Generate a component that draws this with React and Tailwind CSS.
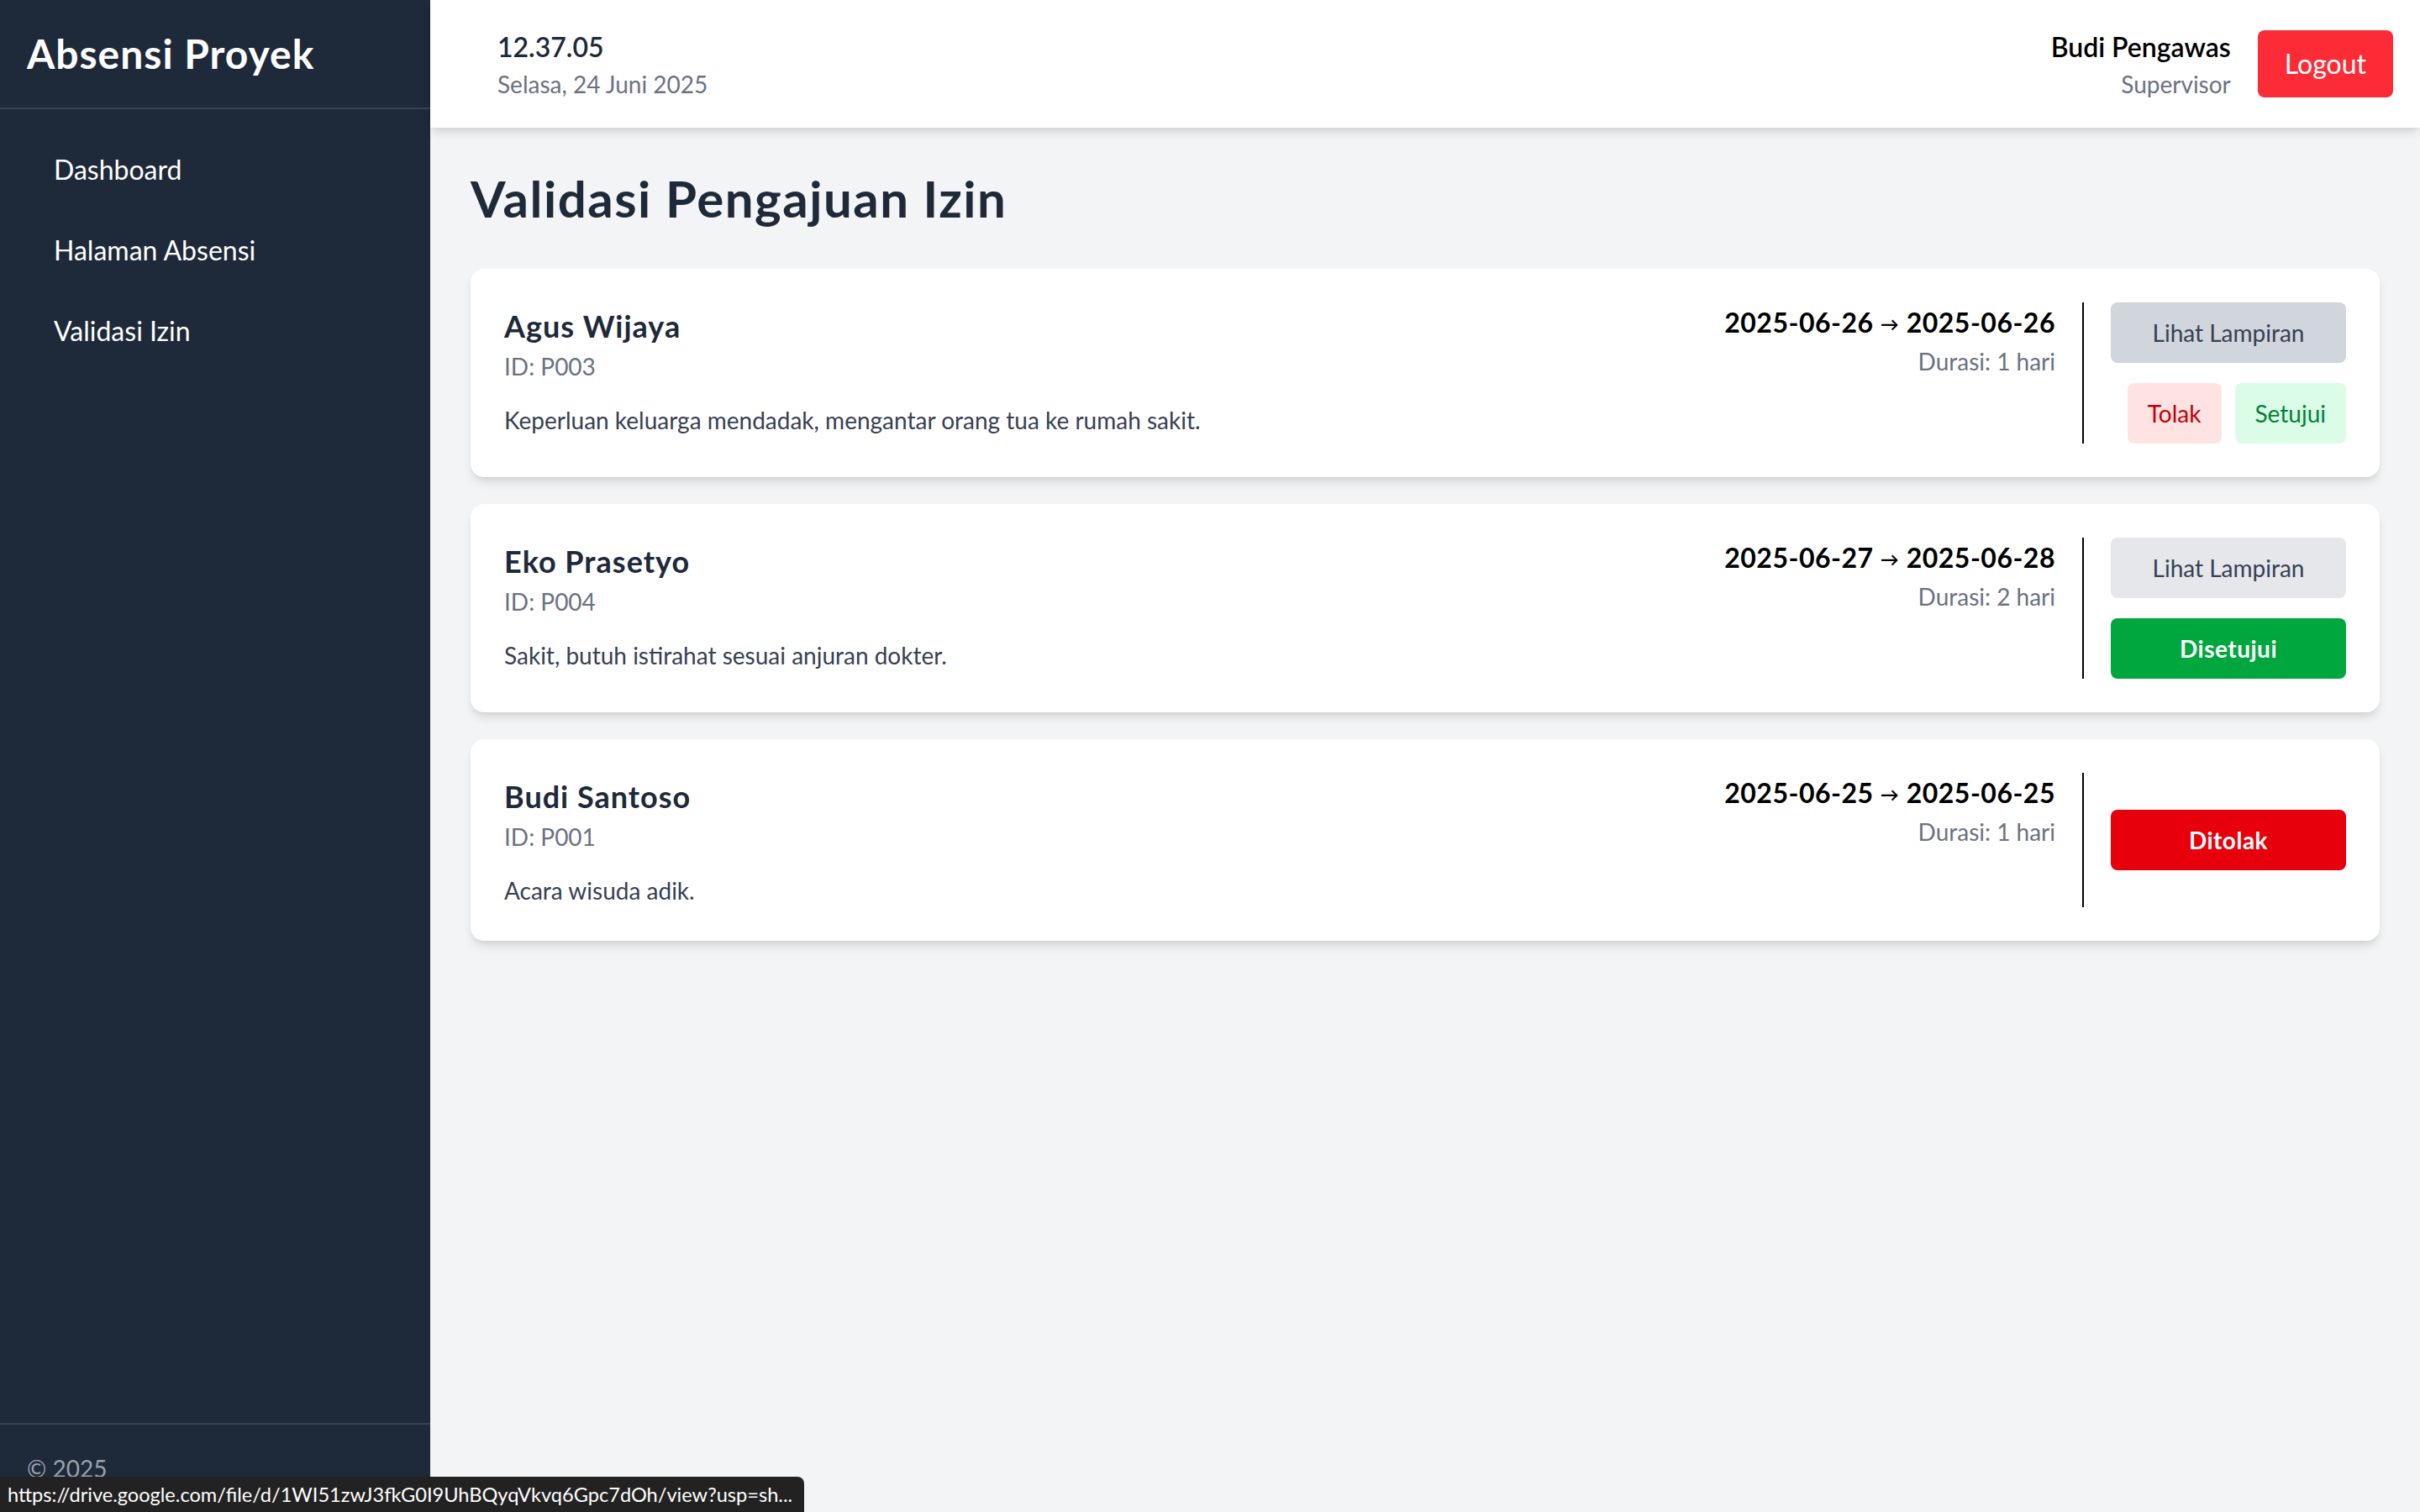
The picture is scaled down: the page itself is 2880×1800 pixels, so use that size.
import React from "react";

const navItems = ["Dashboard", "Halaman Absensi", "Validasi Izin"];

const requests = [
  {
    name: "Agus Wijaya",
    id: "P003",
    reason: "Keperluan keluarga mendadak, mengantar orang tua ke rumah sakit.",
    from: "2025-06-26",
    to: "2025-06-26",
    dur: "Durasi: 1 hari",
    status: "pending",
  },
  {
    name: "Eko Prasetyo",
    id: "P004",
    reason: "Sakit, butuh istirahat sesuai anjuran dokter.",
    from: "2025-06-27",
    to: "2025-06-28",
    dur: "Durasi: 2 hari",
    status: "approved",
  },
  {
    name: "Budi Santoso",
    id: "P001",
    reason: "Acara wisuda adik.",
    from: "2025-06-25",
    to: "2025-06-25",
    dur: "Durasi: 1 hari",
    status: "rejected",
  },
];

function Card({ r, hovered }) {
  return (
    <div className="bg-white rounded-[16px] shadow-[0_8px_12px_-2px_rgba(0,0,0,0.1),0_4px_8px_-4px_rgba(0,0,0,0.1)] p-10 flex justify-between items-stretch">
      <div>
        <h3 className="text-[36px] leading-[56px] font-bold tracking-[1px] text-gray-800">{r.name}</h3>
        <p className="text-[28px] leading-[40px] text-gray-500">ID: {r.id}</p>
        <p className="mt-6 text-[28px] leading-[40px] text-gray-700">{r.reason}</p>
      </div>
      <div className="flex items-stretch gap-8">
        <div className="text-right">
          <p className="text-[32px] leading-[48px] font-bold tracking-[0.5px] text-black">
            {r.from} <span className="text-[22px] align-[2px]">→</span> {r.to}
          </p>
          <p className="text-[28px] leading-[40px] text-gray-500">{r.dur}</p>
        </div>
        <div className="border-l-2 border-black pl-8 flex flex-col justify-center gap-6">
          {r.status !== "rejected" && (
            <button
              className={
                "w-[280px] py-4 rounded-[8px] text-[28px] leading-[40px] text-gray-700 " +
                (hovered ? "bg-gray-300" : "bg-gray-200")
              }
            >
              Lihat Lampiran
            </button>
          )}
          {r.status === "pending" && (
            <div className="flex justify-end gap-4">
              <button className="px-6 py-4 rounded-[8px] text-[28px] leading-[40px] bg-red-100 text-red-700">
                Tolak
              </button>
              <button className="px-6 py-4 rounded-[8px] text-[28px] leading-[40px] bg-green-100 text-green-700">
                Setujui
              </button>
            </div>
          )}
          {r.status === "approved" && (
            <button className="w-[280px] py-4 rounded-[8px] text-[28px] leading-[40px] font-bold tracking-[0.5px] bg-green-600 text-white">
              Disetujui
            </button>
          )}
          {r.status === "rejected" && (
            <button className="w-[280px] py-4 rounded-[8px] text-[28px] leading-[40px] font-bold tracking-[0.5px] bg-red-600 text-white">
              Ditolak
            </button>
          )}
        </div>
      </div>
    </div>
  );
}

export default function App() {
  return (
    <div className="relative flex h-screen overflow-hidden bg-gray-100 [font-family:Lato,'Noto_Sans',sans-serif]">
      <aside className="w-[512px] shrink-0 bg-gray-800 text-white flex flex-col">
        <div className="p-8 border-b-2 border-gray-700">
          <h1 className="text-[48px] leading-[64px] font-bold tracking-[1px]">Absensi Proyek</h1>
        </div>
        <nav className="flex-1 p-8 flex flex-col gap-4">
          {navItems.map((n) => (
            <a key={n} className="block px-8 py-4 rounded-[8px] text-[32px] leading-[48px] text-white">
              {n}
            </a>
          ))}
        </nav>
        <div className="p-8 border-t-2 border-gray-700 text-[28px] leading-[40px] text-gray-400">© 2025</div>
      </aside>

      <div className="flex-1 flex flex-col min-w-0">
        <header className="relative z-10 bg-white shadow-[0_8px_12px_-2px_rgba(0,0,0,0.1),0_4px_8px_-4px_rgba(0,0,0,0.1)] pl-20 pr-8 py-8 flex items-center justify-between">
          <div>
            <div className="text-[32px] leading-[48px] font-semibold text-gray-800">12.37.05</div>
            <div className="text-[28px] leading-[40px] text-gray-500">Selasa, 24 Juni 2025</div>
          </div>
          <div className="flex items-center gap-8">
            <div className="text-right">
              <div className="text-[32px] leading-[48px] font-semibold text-black">Budi Pengawas</div>
              <div className="text-[28px] leading-[40px] text-gray-500">Supervisor</div>
            </div>
            <button className="bg-red-500 text-white px-8 py-4 rounded-[8px] text-[32px] leading-[48px]">
              Logout
            </button>
          </div>
        </header>

        <main className="flex-1 p-12">
          <h2 className="text-[60px] leading-[72px] font-bold tracking-[1.5px] text-gray-800 mb-12">
            Validasi Pengajuan Izin
          </h2>
          <div className="flex flex-col gap-8">
            {requests.map((r, i) => (
              <Card key={r.id} r={r} hovered={i === 0} />
            ))}
          </div>
        </main>
      </div>

      <div className="absolute left-0 bottom-0 w-[957px] h-[42px] bg-[#222222] rounded-tr-[8px] flex items-center pl-[9px]">
        <span className="whitespace-nowrap text-white text-[23.6px] leading-[32px]">
          https://drive.google.com/file/d/1WI51zwJ3fkG0I9UhBQyqVkvq6Gpc7dOh/view?usp=sh...
        </span>
      </div>
    </div>
  );
}
